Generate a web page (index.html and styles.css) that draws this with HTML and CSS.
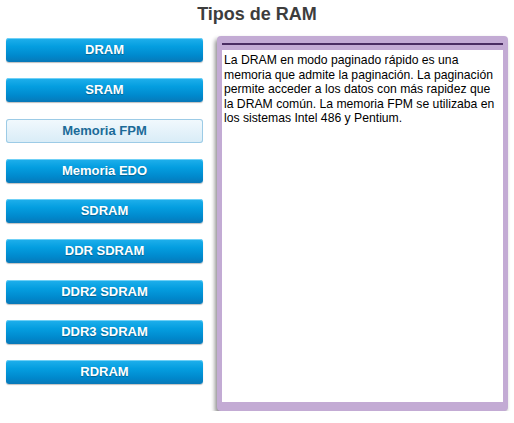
FILE: index.html
```html
<!DOCTYPE html>
<html>
<head>
    <title>Tipos de RAM</title>
    <link rel="stylesheet" href="styles.css">
</head>
<body>
    <h1 class="title">Tipos de RAM</h1>
    <div class="main">
        <div class="menu">
            <div class="btn">DRAM</div>
            <div class="btn">SRAM</div>
            <div class="btn active">Memoria FPM</div>
            <div class="btn">Memoria EDO</div>
            <div class="btn">SDRAM</div>
            <div class="btn">DDR SDRAM</div>
            <div class="btn">DDR2 SDRAM</div>
            <div class="btn">DDR3 SDRAM</div>
            <div class="btn">RDRAM</div>
        </div>
        <div class="panel">
            <div class="panel-bar"></div>
            <div class="panel-body">
                <p>La DRAM en modo paginado rápido es una memoria que admite la paginación. La paginación permite acceder a los datos con más rapidez que la DRAM común. La memoria FPM se utilizaba en los sistemas Intel 486 y Pentium.</p>
            </div>
        </div>
    </div>
</body>
</html>
```

FILE: styles.css
```css
body {
    font-family: "Liberation Sans", Arial, sans-serif;
    background-color: #fff;
    margin: 0;
    padding: 0;
}

.title {
    height: 30px;
    margin: 0;
    font-size: 18px;
    line-height: 28px;
    font-weight: bold;
    color: #3d3d3d;
    text-align: center;
}

.main {
    display: flex;
    padding: 6px 0 0 6px;
}

.menu {
    width: 197px;
    margin-top: 2px;
    display: flex;
    flex-direction: column;
    gap: 16.25px;
}

.btn {
    height: 24px;
    line-height: 24px;
    border-radius: 3px;
    background: linear-gradient(#20b0ec 0%, #049ee0 35%, #0088cc 75%, #0878b8 100%);
    box-shadow: inset 0 1px 0 #6fd0f6, 0 1px 1px rgba(0, 0, 0, 0.25);
    color: #fff;
    font-size: 13px;
    font-weight: bold;
    text-align: center;
    text-shadow: 0 1px 1px rgba(0, 0, 0, 0.3);
}

.btn.active {
    background: linear-gradient(#f2f9fd, #d8ecf7);
    box-shadow: inset 0 0 0 1px #9ccbe6;
    color: #1c6b98;
    text-shadow: none;
}

.panel {
    width: 281px;
    height: 359px;
    margin-left: 14px;
    padding: 7px 5px 9px 5px;
    background-color: #c3abd4;
    border-radius: 4px;
    box-shadow: -2px 3px 4px rgba(0, 0, 0, 0.45);
    display: flex;
    flex-direction: column;
}

.panel-bar {
    height: 2px;
    margin-bottom: 5px;
    background-color: #4a2d62;
}

.panel-body {
    flex: 1;
    background-color: #fff;
    padding: 3px 8px 3px 2px;
}

.panel-body p {
    margin: 0;
    font-size: 12.2px;
    line-height: 14.6px;
    color: #000;
}
```
